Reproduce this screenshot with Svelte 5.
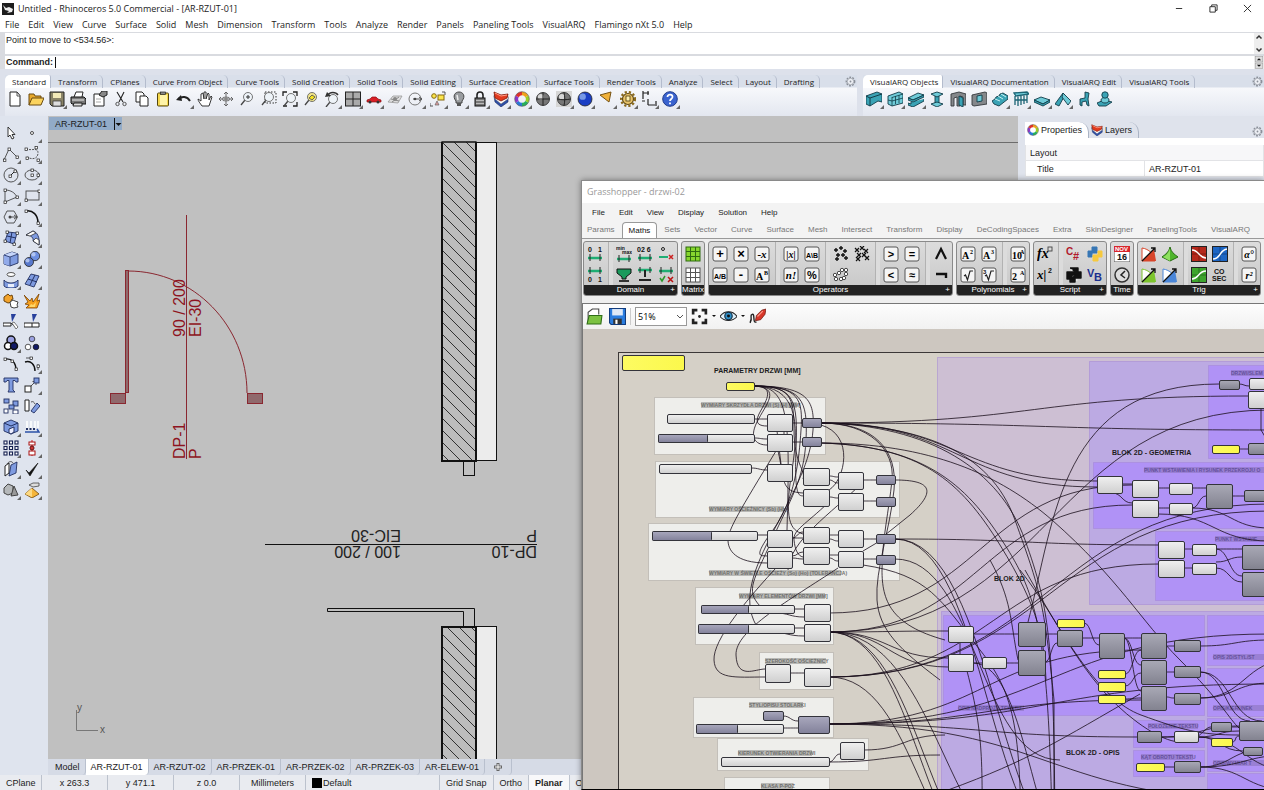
<script>
	const menus = ['File', 'Edit', 'View', 'Curve', 'Surface', 'Solid', 'Mesh', 'Dimension', 'Transform', 'Tools', 'Analyze', 'Render', 'Panels', 'Paneling Tools', 'VisualARQ', 'Flamingo nXt 5.0', 'Help']
	const toolTabs = ['Standard', 'Transform', 'CPlanes', 'Curve From Object', 'Curve Tools', 'Solid Creation', 'Solid Tools', 'Solid Editing', 'Surface Creation', 'Surface Tools', 'Render Tools', 'Analyze', 'Select', 'Layout', 'Drafting']
	const arqTabs = ['VisualARQ Objects', 'VisualARQ Documentation', 'VisualARQ Edit', 'VisualARQ Tools']
	const layouts = ['Model', 'AR-RZUT-01', 'AR-RZUT-02', 'AR-PRZEK-01', 'AR-PRZEK-02', 'AR-PRZEK-03', 'AR-ELEW-01']
	const ghMenus = ['File', 'Edit', 'View', 'Display', 'Solution', 'Help']
	const ghTabs = ['Params', 'Maths', 'Sets', 'Vector', 'Curve', 'Surface', 'Mesh', 'Intersect', 'Transform', 'Display', 'DeCodingSpaces', 'Extra', 'SkinDesigner', 'PanelingTools', 'VisualARQ']

	// a trailing + marks a button with a flyout
	const tools = (names) => names.split(' ').map((n) => ({ name: n.replace('+', ''), flyout: n.endsWith('+') }))

	const standard = tools('new open save+ print props cut copy paste undo+ pan orbit zoom zoomwin zoomext zoomsel undoview+ views+ car+ map+ circle+ osnap+ bulb+ lock+ layers+ wheel+ sphere spherebox+ blue+ flag+ gears+ dims+ help+')
	const arq = tools('wall+ curtain+ beam+ column door window stair+ railing+ slab+ roof+ chair person')
	const side = tools('arrow point+ polyline+ curvepts+ circler+ ellipse+ arc+ rect+ polygon+ fillet+ srfpts+ srfbend+ box+ spheres+ tube+ plane+ puzzle explode trim split group+ ungroup fair blend+ text move+ scatter rotate boxcut+ project+ array+ align+ flip+ check+ solids+ pyramid+')

	const o = 'fill="none" stroke="#444" stroke-width=".9"'
	const pt = (x, y, c = '#fff') => `<rect x="${x - 1}" y="${y - 1}" width="2.4" height="2.4" fill="${c}" stroke="#222" stroke-width=".7"/>`
	const lens = (x, y, c = '#eef3f8') => `<path d="M${x - 3} ${y + 3}L${x - 7} ${y + 8}" stroke="#444" stroke-width="1.3"/><circle cx="${x}" cy="${y}" r="4.5" fill="${c}" stroke="#666" stroke-width=".9"/>`
	const ball = (x, y, r, a, b) => `<circle cx="${x}" cy="${y}" r="${r}" fill="${a}" stroke="#222" stroke-width=".8"/><circle cx="${x - r / 3}" cy="${y - r / 3}" r="${r / 2.2}" fill="${b}" fill-opacity=".7"/>`
	const teal = 'fill="#3aa3b5" stroke="#123c48" stroke-width=".9"'
	const tealLight = 'fill="#6fcbd8" stroke="#123c48" stroke-width=".9"'
	const stone = 'fill="#85888b" stroke="#33383b" stroke-width=".9"'
	const navy = 'fill="#7f9be0" stroke="#223060" stroke-width=".9"'

	const icons = {
		new: `<path d="M3 1H10L13 4.500V15H3Z" fill="#fff" stroke="#222"/><path d="M10 1V5H13" ${o}/>`,
		open: `<path d="M1 14V3H6L7 5H13V8" fill="#e8a92c" stroke="#6a4b10"/><path d="M1 14L4 7H16L13 14Z" fill="#fbd35e" stroke="#6a4b10"/>`,
		save: `<path d="M1 1H15V15H3L1 13Z" fill="#8a8468" stroke="#222"/><rect x="4" y="2" width="8" height="5" fill="#f2e9b8"/><rect x="4" y="10" width="8" height="5" fill="#ddd" stroke="#333" stroke-width=".7"/>`,
		print: `<path d="M4 6L6 1H13L12 6" fill="#fff" stroke="#222"/><path d="M1 6H14L16 8V13H2L1 12Z" fill="#777" stroke="#111"/><path d="M2 9H14" stroke="#eee"/><path d="M4 12H12V15H3Z" fill="#ddd" stroke="#222"/>`,
		props: `<path d="M2 3H12V15H2Z" fill="#fff" stroke="#222"/><path d="M7 4L10 0H15V4L11 6Z" fill="#888" stroke="#222"/><path d="M4 8H9M4 11H9" stroke="#aaa"/>`,
		cut: `<path d="M4 1L10 11M11 1L6 11" stroke="#222" stroke-width="1.100"/><circle cx="4.500" cy="13" r="1.700" ${o}/><circle cx="11.500" cy="13" r="1.700" ${o}/>`,
		copy: `<path d="M2 1H8L10 3V11H2Z" fill="#fff" stroke="#222"/><path d="M6 5H12L14 7V15H6Z" fill="#fff" stroke="#222"/>`,
		paste: `<rect x="2.500" y="2" width="11" height="13" rx="1" fill="#f6d84c" stroke="#54460e"/><rect x="5" y="4" width="7" height="10" fill="#fff4a8"/><rect x="5.500" y="1" width="5" height="2.500" fill="#888" stroke="#222" stroke-width=".7"/>`,
		undo: `<path d="M2 8C6 5 11 5 14 10" fill="none" stroke="#222" stroke-width="2"/><path d="M0 9L5 4L6 10Z" fill="#222"/>`,
		pan: `<path d="M5 15C3 12 1 10 1 8L4 10V3L6 2L7 8V1H9V8L11 2L12 3V9L14 5L15 6L13 12L12 15Z" fill="#fff" stroke="#222" stroke-width=".9"/>`,
		orbit: `<path d="M8 1V15M1 8H15M6 3L8 1L10 3M6 13L8 15L10 13M3 6L1 8L3 10M13 6L15 8L13 10" fill="none" stroke="#666"/><ellipse cx="8" cy="8" rx="4" ry="2" fill="none" stroke="#777"/><circle cx="8" cy="8" r="1.800" fill="#888"/>`,
		zoom: lens(9, 6) + '<path d="M7 6H11M9 4V8" stroke="#333"/>',
		zoomwin: `<rect x="4" y="1" width="11" height="11" fill="none" stroke="#333" stroke-dasharray="1.500 1.500"/>` + lens(8, 6),
		zoomext: `<path d="M1 5V1H5M11 1H15V5M15 11V15H11M5 15H1" fill="none" stroke="#222" stroke-width="1.300"/>` + lens(9, 7),
		zoomsel: lens(9, 6, '#f2e58a') + '<path d="M6 7L9 4L12 6L9 9Z" fill="#f4e21c" stroke="#665"/>',
		undoview: lens(9, 8) + '<path d="M3 5C6 0 12 1 14 4" fill="none" stroke="#333" stroke-width="1.400"/><path d="M1 6L3 1L7 5Z" fill="#333"/>',
		views: `<rect x="0.500" y="1" width="15" height="14" fill="#aaa" stroke="#222"/><path d="M8 1V15M0 8H16" stroke="#222"/>`,
		car: `<path d="M1 9L4 8L6 6H10L12 8L15 9V11H1Z" fill="#d91f26" stroke="#891015" stroke-width=".7"/><circle cx="4" cy="11" r="1.500" fill="#333"/><circle cx="12" cy="11" r="1.500" fill="#333"/>`,
		map: `<path d="M1 11L6 5H15L11 12Z" fill="#ddd" stroke="#999" stroke-width=".8"/><path d="M5 11L12 6M4 8L12 10" stroke="#888"/><circle cx="8" cy="8" r="2" fill="#888"/>`,
		circle: `<circle cx="7" cy="8" r="6" fill="none" stroke="#777"/><path d="M5 8H14M11 6L14 8L11 10" fill="none" stroke="#555"/><circle cx="7" cy="8" r="1.300" fill="#444"/>`,
		osnap: `<circle cx="4" cy="5" r="2.300" fill="#fbe54c" stroke="#86690d"/><rect x="8" y="4" width="6" height="5" fill="#fbe54c" stroke="#86690d"/><path d="M5 14L7 10L9 14Z" fill="#d99" stroke="#666" stroke-width=".7"/><path d="M12 1H15V4M0 12V15H3" ${o}/>`,
		bulb: `<path d="M5 10C1 5 4 1 8 1S15 5 11 10V12H5Z" fill="#9a9da0" stroke="#444"/><path d="M6 4L7 9" stroke="#eee" stroke-width="1.500"/><rect x="6" y="12" width="4" height="3" fill="#555"/>`,
		lock: `<path d="M5 7V4C5 0 11 0 11 4V7" fill="none" stroke="#222" stroke-width="1.600"/><rect x="3" y="7" width="10" height="8" fill="#777" stroke="#111"/><path d="M4 9.500H12M4 12.500H12" stroke="#bbb"/>`,
		layers: `<path d="M1 5L8 9L15 6V11L8 16L2 11Z" fill="#2e4fa8" stroke="#1b2c60" stroke-width=".6"/><path d="M1 4L8 8L15 5V8L8 13L2 8Z" fill="#fff" stroke="#555" stroke-width=".5"/><path d="M1 1L8 4L15 3L14 7L8 10L2 7Z" fill="#e23a1e" stroke="#7d1405" stroke-width=".8"/><path d="M2 2L8 5L14 4" fill="none" stroke="#ffa08a"/>`,
		wheel: `<g fill="none" stroke-width="3.400"><path d="M8 2.500A5.500 5.500 0 0 1 12.800 5.300" stroke="#f0a21c"/><path d="M12.800 5.300A5.500 5.500 0 0 1 12.800 10.800" stroke="#9bcf26"/><path d="M12.800 10.800A5.500 5.500 0 0 1 8 13.500" stroke="#27b05b"/><path d="M8 13.500A5.500 5.500 0 0 1 3.200 10.800" stroke="#2a78d8"/><path d="M3.200 10.800A5.500 5.500 0 0 1 3.200 5.300" stroke="#8b38c8"/><path d="M3.200 5.300A5.500 5.500 0 0 1 8 2.500" stroke="#e0312b"/></g><circle cx="8" cy="8" r="7.300" fill="none" stroke="#555" stroke-width=".6"/>`,
		sphere: ball(8, 8, 6.5, '#777', '#fff') + '<path d="M8 1.500V14.500M1.500 8H14.500" stroke="#222"/>',
		spherebox: `<rect width="16" height="16" fill="#d6d6d6"/>` + ball(8, 8, 6.5, '#777', '#fff') + '<path d="M8 1.500C9 6 9 10 8 14.500M1.500 8C6 9 10 9 14.500 8" fill="none" stroke="#222"/>',
		blue: ball(8, 8, 7, '#1a3ec4', '#9fc0f5'),
		flag: `<path d="M1 4L12 1L10 11Z" fill="#f0b13a" stroke="#775314"/>`,
		gears: `<circle cx="8" cy="8" r="5.500" fill="#e9c46a" stroke="#5d4714" stroke-width="1.200"/><circle cx="8" cy="8" r="7" fill="none" stroke="#8a6a1c" stroke-width="2.200" stroke-dasharray="2.200 2"/><rect x="6" y="5" width="4" height="5" fill="#fff1b0" stroke="#4a3808" stroke-width=".8"/>`,
		dims: `<path d="M8 2H2V8M2 2V0M7 4V0M7 14H14M7 8V14M15 10V15M1 10H4" fill="none" stroke="#222" stroke-width="1.200"/>`,
		help: `<circle cx="8" cy="8" r="7.300" fill="#3a63cf" stroke="#203b8a"/><path d="M5.500 6C5.500 2.500 11 3 10.500 6C10.300 8 8 8 8 10M8 11.500V13.300" fill="none" stroke="#fff" stroke-width="1.800"/>`,

		wall: `<path d="M0 5L11 1L16 3V11L12 10L4 15L0 13Z" ${teal}/><path d="M0 5L4 7L16 3M4 7V15" fill="none" stroke="#123c48"/>`,
		curtain: `<path d="M1 5L12 1L16 3V12L5 15L1 13Z" ${tealLight}/><path d="M5 6V15M8.500 5V13M12 4V12M1 9L5 10L16 7M5 6.500L16 3" fill="none" stroke="#123c48" stroke-width=".8"/>`,
		beam: `<path d="M0 7L10 2L16 4L5 9Z" ${tealLight}/><path d="M0 7L5 9L16 4V6L5 11L0 9ZM3 11V13L0 12V14L5 16L16 10V8" ${teal}/>`,
		column: `<path d="M6 5H10V12H6Z" ${teal}/><path d="M2 13L8 11L14 13L8 16Z" ${tealLight}/><path d="M2 3L8 1L14 3L8 6Z" ${tealLight}/>`,
		door: `<path d="M1 3L9 1L16 3V14H13V6L10 5V15H7V6L4 7V15H1Z" ${stone}/><path d="M9 5L13 7V16L9 14Z" ${teal}/>`,
		window: `<path d="M1 4L14 1L16 2V13L3 15L1 14Z" ${stone}/><path d="M6 5L11 4V10L6 11Z" ${tealLight}/>`,
		stair: `<path d="M0 10L3 8L4 6L7 5L8 3L11 2L16 5V8L7 15L2 13Z" ${teal}/><path d="M3 8L8 10M6 5L11 8M9 3L14 6" stroke="#c5f2f5"/>`,
		railing: `<path d="M1 2L14 1L16 3L3 5ZM2 5V14M5 5V15M8 5V14M11 4V13M14 4V12M2 9H14" fill="#6fcbd8" stroke="#1c6475" stroke-width="1.300"/>`,
		slab: `<path d="M0 9L7 6L16 9L9 13Z" ${tealLight}/><path d="M0 9V11L9 15L16 11V9L9 13Z" ${teal}/>`,
		roof: `<path d="M0 13L8 2L10 4L4 15Z" ${teal}/><path d="M8 2L16 10L13 14L7 6Z" ${tealLight}/>`,
		chair: `<path d="M9 1L13 2L12 8L13 15L11 14L10 10L6 11V15L4 14V8L9 7Z" ${teal}/>`,
		person: `<path d="M0 12L7 9L15 11L9 15L2 15Z" ${teal}/><path d="M4 9C4 6 12 5 12 9S4 13 4 9Z" ${tealLight}/><circle cx="8" cy="4" r="3.200" ${teal}/>`,

		arrow: `<path d="M5 2V12L7 10L9 14L11 13L9 9.500H12Z" fill="#fff" stroke="#222" stroke-width=".9"/>`,
		point: `<circle cx="8" cy="8" r="1.500" fill="#fff" stroke="#222" stroke-width=".8"/>`,
		polyline: `<path d="M1 14L6 3L14 11" ${o}/>` + pt(1.5, 14) + pt(6, 3) + pt(14, 11),
		curvepts: `<path d="M2 3C8 5 14 1 14 7S8 14 3 11" ${o} stroke-dasharray="2 1"/>` + pt(2, 3) + pt(12, 1.5) + pt(3, 12) + pt(14, 14),
		circler: `<circle cx="8" cy="8" r="7" ${o}/><path d="M7 9L12 4" stroke="#222"/>` + pt(7, 9) + pt(12, 4),
		ellipse: `<ellipse cx="8" cy="8" rx="7" ry="5" ${o}/>` + pt(8, 3) + pt(8, 8) + pt(14, 8),
		arc: `<path d="M2 14V2C8 2 12 5 14 9L2 14" ${o}/>` + pt(2, 2) + pt(14, 9) + pt(2, 14),
		rect: `<rect x="2" y="3" width="13" height="9" ${o}/>` + pt(15, 3) + pt(2, 12),
		polygon: `<path d="M4 2H11L14.500 8L11 14H4L1 8Z" ${o}/><path d="M7 8H14M11 6L14 8L11 10" ${o}/><circle cx="7" cy="8" r="1.500" fill="#444"/>`,
		fillet: `<path d="M2 2C9 1 14 6 14 14" fill="none" stroke="#111" stroke-width="1.500"/>` + pt(2, 2) + pt(14, 14),
		srfpts: `<path d="M5 2L14 3L11 14L2 11Z" ${navy}/><path d="M4 6L13 8M9 2L7 13" stroke="#223060"/>` + pt(4, 2) + pt(14, 3) + pt(2, 11) + pt(11, 14),
		srfbend: `<path d="M2 5L9 1C13 2 16 7 15 15L9 11C10 8 7 5 2 5Z" ${navy}/><path d="M2 5L9 1L12 3L6 6Z" fill="#fff" stroke="#333" stroke-width=".8"/><path d="M9 11L12 8L15 10V15Z" fill="#fff" stroke="#333" stroke-width=".8"/>`,
		box: `<path d="M1 4L9 1L15 3V12L7 15L1 13Z" ${navy}/><path d="M1 4L7 6L15 3L9 1Z" fill="#c6d5fa"/><path d="M7 6V15L1 13V4Z" fill="#92abea"/><path d="M1 4L7 6L15 3M7 6V15" fill="none" stroke="#223060" stroke-width=".8"/>`,
		spheres: ball(11, 5, 4.7, '#6d8fe0', '#cfdcfa') + ball(5, 11, 4.5, '#5878cc', '#cfdcfa'),
		tube: `<path d="M1 8C4 12 12 12 15 8V14C12 17 4 17 1 14Z" ${navy}/><ellipse cx="8" cy="2.500" rx="4" ry="2" fill="#fff" stroke="#555"/><path d="M5 12H11V15H5Z" fill="#e8eefc"/>`,
		plane: `<path d="M1 12L7 2L15 4L10 15Z" ${navy}/><path d="M4 7L13 10M11 3L6 13" stroke="#223060"/>`,
		puzzle: `<path d="M1 4L5 1L7 3L9 2L10 6L8 7L9 9L5 10L3 9L1 8Z" fill="#f2a32c" stroke="#6d430a"/><path d="M7 9L10 7L12 8L15 9L14 12L15 14L11 15L8 14Z" fill="#fff" stroke="#444"/>`,
		explode: `<path d="M0 2L6 8L8 5L9 9L15 1L13 8L16 7L13 15H2L5 12L1 11L4 9Z" fill="#f6a01e" stroke="#7b4303" stroke-width=".8"/><path d="M5 14L7 11L9 12L12 9L11 14Z" fill="#ffd76a"/>`,
		trim: `<path d="M8 0H13L9 8Z" fill="#28409c"/><path d="M0 9H8V12H0ZM8 9L13 14" fill="#fff" stroke="#222"/><path d="M9 9L11 8L15 13L13 15Z" fill="#fff" stroke="#777"/>`,
		split: `<path d="M8 0H13L9 8Z" fill="#28409c"/><path d="M0 9H15V13H0ZM8 9V13" fill="#fff" stroke="#222"/>`,
		group: '<circle cx="8" cy="5" r="4" fill="#9aa0e0" stroke="#111" stroke-width="1.500"/><circle cx="5" cy="11" r="3.500" fill="#fff" stroke="#111" stroke-width="1.500"/><circle cx="11" cy="11" r="3.500" fill="#111a66" stroke="#111" stroke-width="1.500"/>',
		ungroup: '<circle cx="8" cy="4" r="2.800" fill="#9aa0e0" stroke="#333" stroke-width=".8"/><circle cx="4" cy="12" r="2.800" fill="#fff" stroke="#333" stroke-width=".8"/><circle cx="12" cy="12" r="2.800" fill="#111a66" stroke="#111" stroke-width=".8"/>',
		fair: `<path d="M2 3C9 2 13 7 13 14" fill="none" stroke="#111" stroke-width="1.400"/>` + pt(2, 3) + pt(9, 5) + pt(13, 13),
		blend: `<path d="M1 6C7 4 11 9 11 15" fill="none" stroke="#111" stroke-width="1.400"/><path d="M2 2H9M14 8V14" ${o}/>` + pt(7, 2) + pt(14, 10),
		text: `<path d="M1 1H15V5H13L12 3.500H10V13L12 15H5L6 13V3.500H4L3 5H1Z" ${navy}/>`,
		move: `<path d="M4 12L12 4M8.500 4.500H12V8" ${o}/><rect x="1" y="9" width="6" height="6" fill="#fff" stroke="#222"/><rect x="10" y="1" width="5" height="5" ${navy}/>`,
		scatter: `<g ${navy}><rect x="1" y="1" width="5" height="4"/><rect x="10" y="3" width="5" height="5"/><rect x="6" y="7" width="5" height="4"/><rect x="1" y="11" width="4" height="4" fill="#fff"/><rect x="10" y="12" width="5" height="4" fill="#fff"/></g>`,
		rotate: `<path d="M1 2H5V13H1Z" fill="#fff" stroke="#222"/><path d="M7 4C9 3 10 4 11 6" ${o}/><path d="M7 13L13 5L16 8L10 15Z" ${navy}/>`,
		boxcut: `<path d="M1 4L8 1L15 4V12L8 15L1 12Z" ${navy}/><path d="M1 4L8 7L15 4" fill="none" stroke="#223060"/><path d="M6 10L11 8V13L8 15L6 14Z" fill="#eef" stroke="#223060"/>`,
		project: `<path d="M3 2V9M7 2V9M11 2V9M14 2V9" stroke="#fff" stroke-width="1.500"/><path d="M1 13H15L13 10" fill="none" stroke="#2c51a8" stroke-width="1.500"/><path d="M2 10H12" stroke="#223060" stroke-dasharray="2 1.500" stroke-width="2"/>`,
		array: [1, 6.5, 12].map((y) => [1, 6.5, 12].map((x) => `<rect x="${x}" y="${y}" width="3" height="3" fill="#fff" stroke="#152050" stroke-width="1.100"/>`).join('')).join(''),
		align: `<path d="M8 0V16" stroke="#c22"/><rect x="5" y="2" width="6" height="3" fill="#fff" stroke="#a11"/><circle cx="8" cy="8" r="2" fill="#c33" stroke="#611"/><rect x="5" y="11" width="6" height="4" fill="#fff" stroke="#a11"/>`,
		flip: `<path d="M2 5L6 2V12L2 15Z" fill="#fff" stroke="#222"/><path d="M8 4L14 1L13 12L6 15Z" ${navy}/><path d="M4 3C6 0 9 0 10 2" ${o}/>`,
		check: `<path d="M2 9L5 12L14 2L6 15Z" fill="#111" stroke="#111" stroke-width=".6"/>`,
		solids: `<path d="M1 6L5 2L10 4V11L5 13L1 11Z" fill="#b5b8ba" stroke="#444"/><path d="M11 4L15 13L8 14Z" fill="#999" stroke="#444"/>`,
		pyramid: `<path d="M1 12L8 6L15 12L8 16Z" fill="#f5b53a" stroke="#70480a" stroke-width=".8"/><path d="M8 6V15L1 12Z" fill="#fdd982"/><path d="M5 3L9 1H15V4L9 5Z" fill="#ddd" stroke="#444" stroke-width=".8"/>`
	}

	// ribbon glyph helpers
	const key = (t, size = 11, extra = '') => `<rect x="1" y="1" width="14" height="14" rx="2" fill="#f5f5f5" stroke="#555"/><text x="8" y="12" text-anchor="middle" font-family="Liberation Sans, sans-serif" font-weight="700" font-size="${size}" ${extra}>${t}</text>`
	const serif = 'font-style="italic" style="font-family: Liberation Serif, serif"'
	const sup = (a, b) => `<rect x="1" y="1" width="14" height="14" rx="2" fill="#f5f5f5" stroke="#555"/><text x="2" y="13" font-family="Liberation Serif, serif" font-weight="700" font-size="10">${a}</text><text x="10" y="8" font-family="Liberation Serif, serif" font-weight="700" font-size="6">${b}</text>`
	const small = (t, x, y, fill = '#111', size = 7) => `<text x="${x}" y="${y}" font-family="Liberation Sans, sans-serif" font-weight="700" font-size="${size}" fill="${fill}">${t}</text>`
	const root = (n) => `<rect x="1" y="1" width="14" height="14" rx="2" fill="#f5f5f5" stroke="#555"/><path d="M4 9L5.500 8L7.500 13L10 4H13" fill="none" stroke="#222" stroke-width="1.200"/>` + small(n, 2, 7, '#111', 6)
	const bar = (y) => `<path d="M1 ${y}H15" stroke="#1fae73" stroke-width="2.500"/><path d="M3 ${y - 4}V${y + 3}M13 ${y - 4}V${y + 3}" stroke="#222"/>`
	const grid = (c, s) => `<rect x="1" y="1" width="14" height="14" fill="${c}" stroke="${s}"/><path d="M5.500 1V15M10.500 1V15M1 5.500H15M1 10.500H15" stroke="${s}"/>`
	const tile = (c, d) => `<rect x="0.500" y="0.500" width="15" height="15" fill="${c}" stroke="#222"/><path d="M8 1V15M1 8H15" stroke="#000" stroke-opacity=".3"/><path d="${d}" fill="none" stroke="#fff" stroke-width="1.500"/>`
	const tri = (c) => `<path d="M1 2C8 3 13 8 14 15H1Z" fill="#fff" stroke="${c}"/><path d="M1 15L13 3L15 15Z" fill="${c}"/><path d="M1 15L14 2M10 2H14V6" fill="none" stroke="#111" stroke-width="1.300"/>`
	const dots = [[3, 4], [8, 2], [12, 5], [5, 9], [10, 9], [13, 12], [4, 13]]

	const ribbon = [
		{ name: 'Domain', more: true, sets: [
			[small('0', 1, 6) + small('1', 11, 6) + bar(12), bar(4) + small('0', 1, 15) + small('1', 11, 15)],
			[small('min', 0, 4, '#111', 5) + small('max', 6, 8, '#111', 5) + bar(13), `<path d="M1 2H15V6L10 10V12H6V10L1 6Z" fill="#1a9a5c" stroke="#111"/><path d="M3 14H13" stroke="#333" stroke-width="2"/>`,
				small('02 6', 0, 6) + bar(12), bar(3) + '<path d="M8 3V10M2 13H14" stroke="#222" stroke-width="2"/>',
				'<circle cx="5" cy="3" r="1.500" fill="none" stroke="#222"/><path d="M1 11H10" stroke="#1fae73" stroke-width="2"/><path d="M11 9L15 13M15 9L11 13" stroke="#c22" stroke-width="1.500"/>', bar(4) + '<path d="M2 11L4 14L7 9" fill="none" stroke="#2a9a2a" stroke-width="1.500"/><path d="M10 10L15 15M15 10L10 15" stroke="#b11" stroke-width="1.500"/>']
		] },
		{ name: 'Matrix', sets: [[grid('#86d62e', '#2f6a10'), grid('#fff', '#555')]] },
		{ name: 'Operators', more: true, sets: [
			[key('+', 13), key('A/B', 7), key('×', 13), key('-', 13), key('-x', 11, serif), sup('A', 'B')],
			[key('|x|', 10, serif), key('n!', 11, serif), key('A\\B', 7), key('%')],
			[dots.map(([x, y]) => `<path d="M${x - 2} ${y}H${x + 2}M${x} ${y - 2}V${y + 2}" stroke="#111" stroke-width="1.400"/>`).join(''), [[3, 12], [2, 8], [6, 6], [9, 3], [13, 3], [13, 7], [8, 12], [11, 11]].map(([x, y]) => `<circle cx="${x}" cy="${y}" r="1.700" fill="#fff" stroke="#222" stroke-width=".8"/>`).join(''), dots.map(([x, y]) => `<path d="M${x - 2} ${y - 2}L${x + 2} ${y + 2}M${x + 2} ${y - 2}L${x - 2} ${y + 2}" stroke="#111" stroke-width="1.200"/>`).join('')],
			[key('&gt;'), key('&lt;'), key('='), key('≈')],
			['<path d="M3 13L8 3L13 13" fill="none" stroke="#111" stroke-width="2.200"/>', '<path d="M3 7H13V11" fill="none" stroke="#111" stroke-width="2.400"/>']
		] },
		{ name: 'Polynomials', more: true, sets: [[sup('A', '2'), root(''), sup('A', '3'), root('3')], [sup('10', 'A'), sup('2', 'A')]] },
		{ name: 'Script', more: true, sets: [
			[`<text x="0" y="12" font-family="Liberation Serif, serif" font-style="italic" font-weight="700" font-size="14">fx</text><rect x="11" y="1" width="4" height="4" ${o}/>`, `<text x="0" y="12" font-family="Liberation Serif, serif" font-style="italic" font-weight="700" font-size="13">x|</text>` + small('2', 11, 6)],
			[small('C', 0, 9, '#b11a2c', 10) + small('#', 7, 14, '#b11a2c', 11), `<path d="M4 1H12V8H6V12H1V5H8M12 5H15V11H9V15H4V12" fill="#111" stroke="#111" stroke-width="1.400" stroke-linejoin="round"/><path d="M5 3H6.500M10 13H11.500" stroke="#fff"/>`,
				`<path d="M5 1H10V7H5V11H1V5H5Z" fill="#3776b4" stroke="#3776b4" stroke-linejoin="round"/><path d="M11 15H6V9H11V5H15V11H11Z" fill="#f6c93e" stroke="#f6c93e" stroke-linejoin="round"/>`, small('V', 0, 10, '#1a2f8e', 11) + small('B', 7, 14, '#1a2f8e', 11)]
		] },
		{ name: 'Time', sets: [[`<rect x="0" y="0" width="16" height="16" fill="#fff" stroke="#555"/><rect x="0" y="0" width="16" height="6" fill="#d8262c"/>` + small('NOV', 1, 5, '#fff', 6) + small('16', 3, 14, '#111', 9), `<circle cx="8" cy="8" r="7" fill="#ddd" stroke="#333" stroke-width="1.500"/><path d="M11 4L7 8L11 11" fill="none" stroke="#222" stroke-width="1.500"/>`]] },
		{ name: 'Trig', more: true, sets: [
			[tri('#d8452a'), tri('#7cc42c'), `<path d="M8 1C9 6 12 8 16 11L8 15L0 11C4 8 7 6 8 1Z" fill="#4fb52c" stroke="#276b12"/><path d="M8 2C8 7 8 12 8 15L1 11C5 9 7 6 8 2Z" fill="#8ee05f"/>`, tri('#4a86d8')],
			[tile('#b5281b', 'M1 4C8 4 8 12 15 12'), tile('#3da42c', 'M1 12C8 12 7 4 15 4'), tile('#1d66c4', 'M1 13C9 13 7 4 15 3'), small('CO', 2, 7) + small('SEC', 0, 14)],
			[key('α°', 10, serif), key('r²', 10, serif)]
		] },
		{ name: '', sets: [['', '']] }
	]

	// canvas items: x, y, right, bottom
	const paleGroups = [[654, 397, 825, 454], [655, 461, 899, 517], [648, 523, 899, 580], [695, 587, 833, 644], [759, 652, 833, 689], [693, 697, 833, 737], [717, 738, 868, 770], [724, 777, 829, 792]]
	const blocks = [
		[937, 357, 1500, 900, '#cdbfd3'], [1089, 361, 1500, 604, '#bcaae3'], [941, 611, 1500, 900, '#bcaae3'],
		[1208, 365, 1500, 458, '#b092f6'], [1093, 462, 1500, 528, '#b092f6'], [1155, 531, 1500, 600, '#b092f6'],
		[943, 615, 1204, 715, '#b092f6'], [1207, 615, 1500, 665, '#b092f6'], [1207, 668, 1500, 716, '#b092f6'],
		[1207, 718, 1500, 771, '#b092f6'], [1207, 773, 1500, 900, '#b092f6'], [1133, 720, 1204, 747, '#b092f6'], [1133, 750, 1204, 776, '#b092f6']
	]
	const sliders = [[667, 414, 754, 423, 0], [658, 434, 754, 442, 49], [659, 464, 751, 473, 0], [652, 531, 757, 540, 59], [701, 605, 794, 613, 47], [698, 624, 794, 633, 50], [696, 724, 783, 733, 41], [721, 757, 829, 766, 0]]
	const nodes = {
		light: [
			[767, 414, 792, 431], [767, 434, 792, 451], [767, 464, 792, 481], [803, 468, 829, 485], [803, 489, 829, 506], [838, 472, 863, 489], [838, 493, 863, 510],
			[767, 530, 792, 547], [767, 551, 792, 568], [803, 527, 829, 543], [803, 547, 829, 564], [838, 530, 863, 547], [838, 551, 863, 567],
			[804, 604, 830, 621], [804, 624, 830, 641], [765, 664, 790, 682], [804, 668, 830, 686], [840, 742, 864, 759],
			[1249, 378, 1280, 389], [1248, 391, 1280, 408], [1097, 476, 1122, 493], [1132, 480, 1158, 497], [1132, 500, 1158, 517], [1169, 483, 1192, 494], [1169, 503, 1192, 514],
			[1158, 541, 1184, 558], [1158, 560, 1184, 577], [1192, 544, 1216, 555], [1192, 563, 1216, 574],
			[948, 626, 973, 642], [948, 654, 973, 671], [982, 657, 1006, 668], [1174, 731, 1198, 742]
		],
		violet: [[802, 418, 821, 427], [802, 437, 821, 446], [876, 475, 895, 484], [876, 497, 895, 506], [876, 534, 895, 543], [876, 555, 895, 564], [763, 711, 783, 720], [798, 716, 829, 733]],
		grey: [
			[1219, 380, 1239, 389], [1248, 443, 1280, 454], [1206, 484, 1232, 508], [1244, 490, 1280, 501], [1242, 545, 1280, 569], [1242, 572, 1280, 596],
			[1018, 622, 1045, 646], [1018, 650, 1045, 675], [1057, 630, 1082, 646], [1099, 633, 1124, 658], [1141, 633, 1166, 658], [1141, 660, 1166, 684], [1141, 686, 1166, 710],
			[1174, 640, 1200, 651], [1174, 666, 1200, 677], [1174, 693, 1200, 704], [1137, 731, 1161, 742], [1211, 722, 1231, 731], [1239, 721, 1280, 740], [1243, 747, 1262, 755], [1174, 761, 1200, 772]
		],
		yellow: [[622, 355, 684, 370], [726, 382, 754, 390], [1212, 445, 1239, 453], [1057, 619, 1084, 627], [1098, 670, 1125, 678], [1098, 682, 1125, 691], [1098, 695, 1125, 703], [1211, 738, 1232, 746], [1136, 763, 1164, 771]]
	}
	const titles = [['PARAMETRY DRZWI [MM]', 714, 373], ['BLOK 2D - GEOMETRIA', 1112, 455], ['BLOK 2D', 994, 581], ['BLOK 2D - OPIS', 1066, 755]]
	const notes = [
		['WYMIARY SKRZYDŁA DRZWI (S) (H) [MM]', 701, 405, 96], ['WYMIARY OŚCIEŻNICY (Sb) (Hb)', 709, 509, 75], ['WYMIARY W ŚWIETLE OŚCIEŻY (So) (Ho) (TOLERANCJA)', 709, 573, 132],
		['WYMIARY ELEMENTÓW DRZWI [MM]', 739, 596, 86], ['SZEROKOŚĆ OŚCIEŻNICY', 765, 661, 61], ['STYL/OPISU STOLARKI', 749, 705, 54], ['KIERUNEK OTWIERANIA DRZWI', 738, 753, 74], ['KLASA P-POŻ', 761, 786, 32]
	]
	const violetNotes = [
		['DRZWI/SLEM', 1231, 373, 50], ['PUNKT WSTAWIENIA I RYSUNEK PRZEKROJU O', 1144, 470, 140], ['PUNKT WSTAWIE', 1215, 539, 60], ['OPIS NADPROŻA TEKSTU', 958, 708, 66],
		['OPIS 2D/STYL/ST', 1213, 657, 60], ['OPIS/KIERUNEK', 1213, 708, 60], ['POŁOŻENIE TEKSTU', 1148, 726, 50], ['KĄT OBROTU TEKSTU', 1141, 757, 52], ['OPIS/WYMIAR T', 1213, 763, 60]
	]

	// straight-through links, drawn with horizontal tangents at both ends
	const links = [
		[754, 419, 767, 419], [754, 438, 767, 439], [751, 468, 767, 470], [757, 535, 767, 535], [792, 423, 802, 423], [792, 442, 802, 442],
		[829, 476, 838, 477], [829, 497, 838, 498], [829, 480, 838, 483], [863, 480, 876, 480], [863, 501, 876, 501], [792, 538, 803, 532], [792, 538, 803, 538], [792, 558, 803, 559], [792, 556, 803, 552],
		[829, 535, 838, 535], [829, 539, 838, 541], [829, 555, 838, 555], [829, 558, 838, 561], [863, 539, 876, 539], [863, 559, 876, 559],
		[794, 609, 804, 609], [794, 628, 804, 628], [775, 613, 804, 617], [770, 632, 804, 636], [790, 673, 804, 673], [783, 716, 798, 721], [783, 728, 798, 728], [829, 762, 840, 754], [829, 762, 940, 755], [864, 750, 945, 735],
		[821, 423, 1248, 396], [821, 423, 1270, 430], [821, 423, 1097, 487], [821, 423, 1097, 481], [895, 539, 1158, 545], [895, 539, 1100, 880], [895, 559, 1060, 760], [895, 539, 1080, 860],
		[829, 613, 1132, 485], [829, 632, 1132, 505], [829, 632, 1270, 410], [829, 632, 948, 631], [829, 632, 948, 658], [829, 632, 948, 667], [829, 632, 1020, 880], [829, 632, 1060, 880], [829, 632, 1010, 880],
		[829, 677, 1270, 504], [829, 677, 1270, 511], [829, 677, 1158, 564], [829, 677, 1010, 880], [829, 724, 1270, 634], [829, 724, 1141, 700], [829, 724, 1137, 737], [829, 724, 1270, 800], [829, 724, 1141, 650], [829, 724, 1270, 684],
		[1239, 384, 1249, 386], [1239, 449, 1248, 449], [1122, 484, 1132, 484], [1112, 493, 1132, 503], [1158, 488, 1169, 488], [1158, 508, 1169, 508], [1192, 488, 1206, 488], [1192, 508, 1206, 496], [1232, 496, 1244, 496],
		[1158, 514, 1270, 541], [1192, 508, 1270, 528], [1184, 549, 1192, 549], [1184, 568, 1192, 568], [1216, 549, 1242, 549], [1216, 549, 1242, 576], [1216, 562, 1242, 557], [1216, 568, 1242, 582],
		[973, 634, 1018, 634], [973, 663, 982, 663], [1006, 663, 1018, 663], [1045, 634, 1057, 634], [1045, 662, 1057, 643], [1084, 623, 1099, 645], [1082, 638, 1099, 638], [1124, 638, 1141, 638], [1124, 638, 1141, 665], [1124, 638, 1141, 691],
		[1125, 674, 1141, 650], [1125, 686, 1141, 673], [1125, 699, 1141, 698], [1166, 646, 1174, 646], [1166, 672, 1174, 672], [1166, 697, 1174, 698], [1200, 646, 1270, 640], [1200, 672, 1250, 721], [1200, 672, 1262, 721], [1200, 698, 1290, 660],
		[1200, 698, 1270, 683], [1161, 737, 1174, 737], [1164, 767, 1174, 767], [1200, 767, 1262, 750], [1200, 767, 1290, 790], [1200, 767, 1290, 755], [1198, 737, 1239, 731], [1231, 727, 1239, 727], [1232, 742, 1239, 736], [1161, 737, 1239, 726],
		[1198, 737, 1290, 770], [1198, 737, 1243, 751], [973, 663, 1090, 880]
	]
	const linkPath = ([x1, y1, x2, y2]) => {
		const d = Math.max((x2 - x1) / 2, 5)
		return `M${x1} ${y1}C${x1 + d} ${y1} ${x2 - d} ${y2} ${x2} ${y2}`
	}
	// links that loop back or leave the visible part
	const loops = [
		'M754 386C778 386 764 404 759 414S760 426 767 426', 'M754 386C782 388 766 404 757 422S758 445 767 445',
		'M754 386C790 386 794 396 794 430S806 470 803 479', 'M754 386C795 386 798 400 796 450S800 495 803 496', 'M754 386C800 386 803 400 801 430S795 500 773 530 762 555 767 556',
		'M754 386C802 386 808 400 806 440S790 500 772 540 745 590 760 606', 'M754 386C808 386 815 400 813 430S795 490 774 530 742 600 756 625', 'M754 386C796 386 800 420 792 470S790 530 803 534', 'M754 386C790 386 790 420 787 530',
		'M777 431L781 464M784 431V434M776 451C740 510 728 530 728 540S735 563 767 563', 'M778 451C785 480 780 492 803 493', 'M829 502C805 525 793 530 794 540S798 556 803 557', 'M821 425C855 435 845 480 829 490', 'M863 482C830 515 790 540 788 570',
		'M895 480C930 480 938 490 910 515L885 535', 'M821 423C870 423 895 450 892 480S882 540 882 570 890 625 945 640', 'M821 423C875 423 898 450 894 490S875 570 877 600 900 650 940 680',
		'M863 551L890 535', 'M863 565C930 575 940 600 980 650S1020 740 1022 880', 'M838 568C790 600 735 630 736 655S755 669 765 669', 'M792 551C745 600 713 640 714 660S735 677 765 677',
		'M821 443C930 446 970 490 1005 545S1050 640 1053 880', 'M821 443C920 446 960 480 1000 545S1044 640 1046 680', 'M821 443C930 443 1000 475 1052 520C1120 580 1140 620 1180 660S1230 720 1239 728',
		'M821 423C930 425 1000 470 1025 540S1055 640 1055 880', 'M821 423C920 425 990 450 1015 520S1044 600 1054 700V880', 'M1028 622C1055 520 1060 384 1219 384', 'M948 790C1030 760 1060 740 1140 694',
		'M1018 660C1010 620 1012 600 990 560', 'M1020 570C1060 620 1080 680 1137 722S1200 727 1211 727', 'M1025 570C1065 640 1100 700 1141 715S1200 735 1239 735', 'M960 642V654M967 671C985 740 982 760 982 880', 'M1261 408V430L1270 445'
	]

	let zoom = $state('51%')
	let command = $state('')
</script>

{#snippet tool(t)}
	<button class="tool" class:flyout={t.flyout} aria-label={t.name}>
		<svg viewBox="0 0 16 16">{@html icons[t.name]}</svg>
	</button>
{/snippet}

{#snippet gear()}
	<button class="gear" aria-label="Options">
		<svg viewBox="0 0 12 12"><circle cx="6" cy="6" r="4.600" fill="none" stroke="#8a8f98" stroke-width="1.500" stroke-dasharray="2 1.300" /><circle cx="6" cy="6" r="3.500" fill="#eef0f5" stroke="#8a8f98" stroke-width=".7" /><circle cx="6" cy="6" r="1" fill="#8a8f98" /></svg>
	</button>
{/snippet}

<div class="rhino">
	<header class="titlebar">
		<svg class="logo" viewBox="0 0 12 12"><rect width="12" height="12" fill="#1d1d1d" /><path d="M1 2L4 5L7 4L11 6L10 9L5 10L7 8L3 7Z" fill="#eee" /></svg>
		<h1>Untitled - Rhinoceros 5.0 Commercial - [AR-RZUT-01]</h1>
		<div class="window-buttons">
			<button aria-label="Minimize"><svg viewBox="0 0 10 10"><path d="M1 5H8" stroke="#222" /></svg></button>
			<button aria-label="Restore"><svg viewBox="0 0 10 10"><path d="M1 3H7V9H1ZM3 3V1H9V7H7" fill="none" stroke="#222" /></svg></button>
			<button aria-label="Close"><svg viewBox="0 0 10 10"><path d="M1 1L9 9M9 1L1 9" stroke="#222" /></svg></button>
		</div>
	</header>

	<nav class="menubar">
		{#each menus as m}<button>{m}</button>{/each}
	</nav>

	<section class="command">
		<div class="history">
			<span>Point to move to &lt;534.56&gt;:</span>
			<svg viewBox="0 0 8 16"><path d="M2 4L4 2L6 4M2 12L4 14L6 12" fill="none" stroke="#333" stroke-width="1.200" /></svg>
		</div>
		<label class="prompt">
			<b>Command:</b>
			<i></i>
			<input bind:value={command} />
			<svg viewBox="0 0 8 12"><rect x="0.500" y="0.500" width="7" height="5" fill="#ddd" stroke="#999" stroke-width=".5" /><rect x="0.500" y="6.500" width="7" height="5" fill="#ddd" stroke="#999" stroke-width=".5" /><path d="M2 4L4 2L6 4ZM2 8L4 10L6 8Z" fill="#111" /></svg>
		</label>
	</section>

	<section class="toolbars">
		<div class="toolbar standard">
			<div class="tabs">
				{#each toolTabs as t, i}<button class:active={i === 0}>{t}</button>{/each}
				{@render gear()}
			</div>
			<div class="tools spread">
				{#each standard as t}{@render tool(t)}{/each}
			</div>
		</div>
		<div class="toolbar arq">
			<div class="tabs">
				{#each arqTabs as t, i}<button class:active={i === 0}>{t}</button>{/each}
				{@render gear()}
			</div>
			<div class="tools">
				{#each arq as t}{@render tool(t)}{/each}
			</div>
		</div>
	</section>

	<main>
		<aside class="sidebar">
			{#each side as t}{@render tool(t)}{/each}
		</aside>

		<div class="workspace">
			<div class="viewport">
				<button class="view-title"><span>AR-RZUT-01</span><svg viewBox="0 0 8 12"><path d="M1 0V12" stroke="#111" /><path d="M2 5H8L5 8Z" fill="#111" /></svg></button>
				<svg class="sheet">
					<defs>
						<pattern id="hatch" width="12" height="12" patternUnits="userSpaceOnUse">
							<path d="M-1 -1L13 13M-1 11L1 13M11 -1L13 1" stroke="#222" stroke-width=".9" />
						</pattern>
					</defs>
					<g transform="translate(-48 -116)">
						<path d="M48 142.500H1600" stroke="#6c6c6c" />
						<g class="walls">
							<rect x="476" y="142.500" width="20.500" height="318" fill="#ececec" />
							<rect x="442" y="142" width="34" height="319" fill="#bdbdbd" />
							<rect x="442" y="142" width="34" height="319" fill="url(#hatch)" />
							<path d="M442 142V461H476V142" class="heavy" />
							<rect x="463.500" y="461.500" width="11" height="14" fill="none" />
							<rect x="476" y="626.500" width="20.500" height="200" fill="#ececec" />
							<rect x="442" y="627" width="34" height="200" fill="#bdbdbd" />
							<rect x="442" y="627" width="34" height="200" fill="url(#hatch)" />
							<path d="M442 827V627H476V827" class="heavy" />
							<path d="M327.500 608.500H474.500V626.500H463.500V611.500H327.500Z" fill="none" />
							<path d="M265 544.500H537" />
						</g>
						<g class="marks">
							<text transform="translate(401 546) rotate(180)">100 / 200</text>
							<text transform="translate(537 546) rotate(180)">DP-10</text>
							<text transform="translate(401 530) rotate(180)">EIC-30</text>
							<text transform="translate(537 530) rotate(180)">P</text>
						</g>
						<g class="door">
							<rect x="125.500" y="270.500" width="3" height="122" />
							<rect x="110.500" y="393.500" width="15" height="10" />
							<rect x="247.500" y="393.500" width="15" height="10" />
							<path d="M128 271C194 271 247 326 247 393M186.500 215V459" fill="none" />
						</g>
						<g class="marks red">
							<text transform="translate(185 337) rotate(-90)">90 / 200</text>
							<text transform="translate(201 337) rotate(-90)">EI-30</text>
							<text transform="translate(185 459) rotate(-90)">DP-1</text>
							<text transform="translate(201 459) rotate(-90)">P</text>
						</g>
						<path d="M76.500 710V730.500H98" fill="none" stroke="#777" />
						<text x="77" y="711" class="axis">y</text>
						<text x="100" y="733" class="axis">x</text>
					</g>
				</svg>
			</div>
			<nav class="layout-tabs">
				{#each layouts as l, i}<button class:active={i === 1}>{l}</button>{/each}
				<button class="add" aria-label="Add layout"><svg viewBox="0 0 8 8"><path d="M4 0V8M0 4H8" stroke="#666" stroke-width="3" /><path d="M4 1V7M1 4H7" stroke="#fff" /></svg></button>
			</nav>
		</div>

		<aside class="panel">
			<div class="panel-tabs">
				<button class="active"><svg viewBox="0 0 16 16">{@html icons.wheel}</svg>Properties</button>
				<button><svg viewBox="0 0 16 16">{@html icons.layers}</svg>Layers</button>
				{@render gear()}
			</div>
			<table>
				<tbody>
					<tr><th colspan="2">Layout</th></tr>
					<tr><td class="name">Title</td><td>AR-RZUT-01</td></tr>
				</tbody>
			</table>
		</aside>
	</main>

	<footer class="status">
		<span class="w-s">CPlane</span>
		<span class="w-m">x 263.3</span>
		<span class="w-m">y 471.1</span>
		<span class="w-m">z 0.0</span>
		<span class="w-m">Millimeters</span>
		<span class="w-l"><i></i>Default</span>
		<button>Grid Snap</button>
		<button>Ortho</button>
		<button class="on">Planar</button>
		<button>Osnap</button>
	</footer>

	<section class="grasshopper">
		<h2>Grasshopper - drzwi-02</h2>
		<nav class="gh-menu">
			{#each ghMenus as m}<button>{m}</button>{/each}
		</nav>
		<nav class="gh-tabs">
			{#each ghTabs as t, i}<button class:active={i === 1}>{t}</button>{/each}
		</nav>
		<div class="ribbon">
			{#each ribbon as g}
				<div class="ribbon-group">
					<div class="sets">
						{#each g.sets as set}
							<div class="set">
								{#each set as icon}
									<button aria-label={g.name}><svg viewBox="0 0 16 16">{@html icon}</svg></button>
								{/each}
							</div>
						{/each}
					</div>
					<div class="ribbon-name"><span>{g.name}</span>{#if g.more}<em>+</em>{/if}</div>
				</div>
			{/each}
		</div>
		<div class="canvas-bar">
			<button aria-label="Open"><svg viewBox="0 0 16 16"><path d="M2 15V4L6 1H12V6" fill="#fff" stroke="#444" /><path d="M1 15L3 7H15L14 15Z" fill="#7cc242" stroke="#2f6d17" /></svg></button>
			<button aria-label="Save"><svg viewBox="0 0 16 16"><path d="M0.500 0.500H15.500V15.500H2L0.500 14Z" fill="#2a7de0" stroke="#123c7d" /><rect x="3" y="1" width="10" height="6" fill="#dfe9f7" /><rect x="4" y="10" width="8" height="5" fill="#333" /><rect x="6" y="11" width="2" height="4" fill="#fff" /></svg></button>
			<hr />
			<div class="zoom">
				<select bind:value={zoom} aria-label="Zoom"><option>51%</option><option>100%</option></select>
				<svg viewBox="0 0 8 8"><path d="M1 2L4 5L7 2" fill="none" stroke="#555" /></svg>
			</div>
			<button aria-label="Zoom extents"><svg viewBox="0 0 16 16"><path d="M2 6V2H6M10 2H14V6M14 10V14H10M6 14H2V10" fill="none" stroke="#222" stroke-width="2.500" /><circle cx="8" cy="8" r="1.300" fill="#222" /></svg></button>
			<b class="caret"></b>
			<button aria-label="Preview"><svg viewBox="0 0 16 16"><path d="M0 8C4 2 12 2 16 8C12 13 4 13 0 8Z" fill="#dff1fb" stroke="#222" /><circle cx="8" cy="7.500" r="3.500" fill="#2e8fc7" stroke="#123" /><circle cx="8" cy="7.500" r="1.400" fill="#111" /></svg></button>
			<b class="caret"></b>
			<button aria-label="Sketch"><svg viewBox="0 0 16 16"><path d="M1 14C4 8 0 7 3 6S3 15 7 13" fill="none" stroke="#222" stroke-width="1.300" /><path d="M6 12L7 7L12 2L16 1L15 6L11 11Z" fill="#d8372a" stroke="#6d1a12" stroke-width=".7" /><path d="M8 8L13 3" stroke="#ff9c8c" /></svg></button>
		</div>
		<svg class="canvas">
			<defs>
				<linearGradient id="light" x2="0" y2="1"><stop stop-color="#f0f0f0" /><stop offset="1" stop-color="#cfcfcf" /></linearGradient>
				<linearGradient id="violet" x2="0" y2="1"><stop stop-color="#a9a8bd" /><stop offset="1" stop-color="#82819a" /></linearGradient>
				<linearGradient id="grey" x2="0" y2="1"><stop stop-color="#a9a9b6" /><stop offset="1" stop-color="#82828f" /></linearGradient>
				<linearGradient id="yellow"><stop stop-color="#fdfb62" /><stop offset="1" stop-color="#fbf84c" /></linearGradient>
			</defs>
			<g transform="translate(-583 -329)">
				<rect x="618.500" y="352.500" width="1200" height="900" fill="#d5d0c7" stroke="#3c3838" />
				{#each blocks as [x, y, r, b, fill]}
					<rect x={x + 0.5} y={y + 0.5} width={r - x} height={b - y} {fill} class="block" />
				{/each}
				{#each paleGroups as [x, y, r, b]}
					<rect x={x + 0.5} y={y + 0.5} width={r - x} height={b - y} class="pale" />
				{/each}
				{#each notes as [t, x, y, w]}
					<rect {x} y={y - 3} width={w} height="6" fill="#b9b9b6" />
					<text {x} y={y + 2} class="note">{t}</text>
				{/each}
				{#each violetNotes as [t, x, y, w]}
					<rect {x} y={y - 3} width={w} height="6" fill="#9a80d4" />
					<text {x} y={y + 2} class="note violet">{t}</text>
				{/each}
				<g class="wires">
					{#each links as l}<path d={linkPath(l)} />{/each}
					{#each loops as d}<path {d} />{/each}
				</g>
				{#each sliders as [x, y, r, b, dark]}
					<rect x={x + 0.5} y={y + 0.5} width={r - x} height={b - y} rx="1.500" fill="url(#light)" class="node" />
					{#if dark}<rect x={x + 0.5} y={y + 0.5} width={dark} height={b - y} rx="1" fill="url(#violet)" class="node" />{/if}
				{/each}
				{#each Object.entries(nodes) as [kind, list]}
					{#each list as [x, y, r, b]}
						<rect x={x + 0.5} y={y + 0.5} width={r - x} height={b - y} rx="1.500" fill="url(#{kind})" class="node" />
					{/each}
				{/each}
				{#each titles as [t, x, y]}<text {x} {y} class="title">{t}</text>{/each}
			</g>
		</svg>
	</section>
</div>

<style>
	:global(body) {
		margin: 0;
	}

	.rhino {
		position: relative;
		display: flex;
		flex-direction: column;
		height: 100vh;
		overflow: hidden;
		background: #dfe3ec;
		color: #1c1c1c;
		font: 9px/12px 'Liberation Sans', Arial, sans-serif;
	}

	button {
		padding: 0;
		border: 0;
		background: none;
		color: inherit;
		font: inherit;
		white-space: nowrap;
	}

	svg {
		display: block;
	}

	h1,
	h2 {
		margin: 0;
		font-size: inherit;
		font-weight: 400;
	}

	.titlebar {
		display: flex;
		align-items: center;
		height: 17px;
		padding-left: 2px;
		background: #fff;
	}

	.titlebar h1 {
		flex: 1;
		padding-left: 4px;
		font-family: 'Open Sans', sans-serif;
	}

	.logo {
		width: 12px;
		height: 12px;
	}

	.window-buttons {
		display: flex;
	}

	.window-buttons button {
		display: grid;
		place-items: center;
		width: 34px;
		height: 16px;
	}

	.window-buttons svg {
		width: 9px;
		height: 9px;
	}

	.menubar {
		display: flex;
		gap: 9px;
		height: 15px;
		padding-left: 5px;
		background: #fff;
		font-family: 'Open Sans', sans-serif;
	}

	.command {
		padding: 1px 0 0 5px;
		background: #d9dbe0;
	}

	.history,
	.prompt {
		display: flex;
		justify-content: space-between;
		background: #fff;
	}

	.history {
		height: 21px;
	}

	.history svg,
	.prompt svg {
		width: 10px;
		background: #eee;
	}

	.history span {
		padding: 1px;
	}

	.prompt {
		height: 13px;
		margin-top: 2px;
		padding-left: 1px;
	}

	.prompt i {
		width: 1px;
		height: 11px;
		margin: 1px 0 0 2px;
		background: #111;
	}

	.prompt input {
		flex: 1;
		min-width: 0;
		padding: 0;
		border: 0;
		outline: 0;
		font: inherit;
	}

	.toolbars {
		display: flex;
		gap: 6px;
		padding: 6px 0 0 5px;
		background: #dde1eb;
	}

	.toolbar {
		display: flex;
		flex-direction: column;
		min-width: 0;
		background: linear-gradient(#d9dfea 12px, #f7f8fb 13px, #e3e7f0);
	}

	.standard {
		flex: 852;
	}

	.arq {
		flex: 401;
	}

	.tabs {
		display: flex;
		height: 13px;
		font: 8px/13px 'Open Sans', sans-serif;
	}

	.tabs > button:not(.gear) {
		padding: 0 5px 0 7px;
		border-right: 1px solid #b4bccd;
		border-radius: 0 5px 0 0;
	}

	.tabs > .active:not(.gear) {
		padding-right: 4px;
		background: #fff;
		border-radius: 5px 2px 0 0;
	}

	.gear {
		width: 12px;
		margin-left: auto;
	}

	.gear svg {
		width: 11px;
		height: 11px;
	}

	.tools {
		display: flex;
		gap: 1px;
		height: 28px;
		padding-left: 1px;
	}

	.spread {
		max-width: 675px;
		justify-content: space-between;
		padding-left: 0;
	}

	.tool {
		position: relative;
		display: grid;
		place-items: center;
		width: 20px;
		height: 21px;
	}

	.tool svg {
		width: 16px;
		height: 16px;
	}

	.flyout::after {
		content: '';
		position: absolute;
		right: 0;
		bottom: 0;
		border-style: solid;
		border-width: 0 0 4px 4px;
		border-color: transparent transparent #666;
	}

	main {
		display: flex;
		flex: 1;
		min-height: 0;
	}

	.sidebar {
		display: grid;
		grid-template-columns: 21px 21px;
		grid-auto-rows: 21px;
		align-content: start;
		width: 48px;
		padding: 6px 0 0 1px;
		box-sizing: border-box;
		background: #dfe4ee;
	}

	.workspace {
		display: flex;
		flex-direction: column;
		flex: 1;
		min-width: 0;
	}

	.viewport {
		position: relative;
		flex: 1;
		min-height: 0;
		background: #c0c0c0;
	}

	.view-title {
		position: absolute;
		top: 1px;
		left: 1px;
		display: flex;
		align-items: center;
		gap: 6px;
		height: 13px;
		padding-left: 6px;
		background: #92abc8;
	}

	.view-title svg {
		width: 9px;
		height: 12px;
	}

	.sheet {
		width: 100%;
		height: 100%;
	}

	.walls {
		stroke: #111;
		stroke-width: 1;
	}

	.walls .heavy {
		fill: none;
		stroke-width: 2;
	}

	.marks {
		fill: #222;
		font-size: 16px;
	}

	.marks.red {
		fill: #8e1420;
	}

	.door {
		fill: #90696c;
		stroke: #8a2730;
	}

	.axis {
		fill: #555;
		font-size: 10px;
	}

	.layout-tabs {
		display: flex;
		height: 16px;
		padding-left: 2px;
		background: #d6dbe6;
		line-height: 16px;
	}

	.layout-tabs button {
		padding: 0 5px;
		border-right: 1px solid #b9c0ce;
		border-radius: 0 0 4px 0;
	}

	.layout-tabs .active {
		background: #fff;
	}

	.layout-tabs .add {
		padding: 0 9px;
	}

	.layout-tabs svg {
		width: 8px;
		height: 8px;
	}

	.panel {
		width: 246px;
		padding: 6px 0 0 7px;
		box-sizing: border-box;
	}

	.panel-tabs {
		display: flex;
		height: 16px;
	}

	.panel-tabs button:not(.gear) {
		display: flex;
		align-items: center;
		gap: 2px;
		padding: 0 6px 0 2px;
		border-right: 1px solid #aab3c4;
		border-radius: 0 10px 0 0;
	}

	.panel-tabs .active:not(.gear) {
		background: #fff;
	}

	.panel-tabs button:not(.gear) svg {
		width: 12px;
		height: 12px;
	}

	.panel-tabs .gear {
		padding-top: 3px;
	}

	table {
		width: 100%;
		border-top: 7px solid #fff;
		border-collapse: collapse;
		background: #fff;
	}

	th,
	td {
		height: 15px;
		padding: 0 4px;
		border: 1px solid #e2e3e6;
		font-weight: 400;
		text-align: left;
	}

	th {
		background: #f7f7f9;
	}

	.name {
		width: 103px;
		padding-left: 11px;
	}

	.status {
		display: flex;
		height: 15px;
		background: #e9ebf0;
		line-height: 16px;
	}

	.status > * {
		padding: 0 6px;
		border-right: 1px solid #bcc2cd;
		box-sizing: border-box;
		text-align: center;
	}

	.w-s {
		width: 42px;
	}

	.w-m {
		width: 66px;
	}

	.w-l {
		display: flex;
		gap: 1px;
		width: 134px;
	}

	.w-l i {
		width: 10px;
		height: 10px;
		margin-top: 3px;
		background: #000;
	}

	.on {
		background: #f8f8fa;
		font-weight: 700;
	}

	.grasshopper {
		position: absolute;
		inset: 180px 0 0 581px;
		display: flex;
		flex-direction: column;
		overflow: hidden;
		border-top: 1px solid #8a8a8a;
		border-left: 1px solid #8a8a8a;
		border-bottom: 1px solid #000;
		background: #fff;
		box-shadow: 0 0 6px #0006;
		font-size: 8px;
	}

	.grasshopper h2 {
		flex: none;
		padding-left: 5px;
		color: #999;
		font: 9px/22px 'Open Sans', sans-serif;
	}

	.gh-menu,
	.gh-tabs {
		display: flex;
		flex: none;
		background: #f3f3f3;
	}

	.gh-menu {
		gap: 14px;
		height: 19px;
		padding-left: 10px;
	}

	.gh-tabs {
		height: 16px;
		padding-left: 5px;
		gap: 14px;
		color: #777;
	}

	.gh-tabs .active {
		margin: 0 -7px;
		padding: 0 6px;
		border: 1px solid #999;
		border-bottom: 0;
		border-radius: 4px 4px 0 0;
		background: #fff;
		color: #111;
	}

	.ribbon {
		display: flex;
		flex: none;
		gap: 3px;
		padding: 2px 0 7px 1px;
		border-top: 1px solid #999;
		background: #eee;
	}

	.ribbon-group {
		display: flex;
		flex: none;
		flex-direction: column;
		border: 1px solid #8a8a8a;
		border-radius: 3px;
		background: linear-gradient(#dcdcdc, #c6c6c6);
		overflow: hidden;
	}

	.sets {
		display: flex;
		gap: 8px;
		padding-right: 1px;
	}

	.set {
		display: grid;
		grid-auto-flow: column;
		grid-template-rows: 21px 21px;
		grid-auto-columns: 21px;
		padding-top: 1px;
	}

	.set + .set {
		box-shadow: -4px 0 #dcdcdc, -5px 0 #b2b2b2;
	}

	.set button {
		display: grid;
		place-items: center;
	}

	.set svg {
		width: 16px;
		height: 16px;
	}

	.ribbon-name {
		position: relative;
		height: 10px;
		background: #222;
		color: #fff;
		line-height: 9px;
		text-align: center;
	}

	.ribbon-name em {
		position: absolute;
		right: 2px;
		font-style: normal;
	}

	.canvas-bar {
		display: flex;
		flex: none;
		align-items: center;
		gap: 4px;
		height: 26px;
		padding-left: 3px;
		border-top: 1px solid #777;
		border-left: 1px solid #777;
		box-sizing: border-box;
		background: linear-gradient(#fdfdfd, #f1f1f1);
	}

	.canvas-bar button + button {
		margin-left: 2px;
	}

	.canvas-bar button svg {
		width: 17px;
		height: 17px;
	}

	.canvas-bar hr {
		width: 1px;
		height: 17px;
		margin: 0;
		border: 0;
		background: #ccc;
	}

	.zoom {
		position: relative;
		width: 52px;
	}

	.zoom select {
		display: block;
		width: 100%;
		height: 19px;
		padding: 0 2px;
		border: 1px solid #999;
		border-radius: 0;
		appearance: none;
		background: #fff;
		font: 9px 'Open Sans', sans-serif;
	}

	.zoom svg {
		position: absolute;
		top: 6px;
		right: 3px;
		width: 8px;
		height: 8px;
		pointer-events: none;
	}

	.caret {
		border: 2px solid transparent;
		border-top-color: #111;
	}

	.canvas {
		flex: 1;
		width: 100%;
		min-height: 0;
		border-left: 1px solid #777;
		background: #cdc7c0;
	}

	.block {
		stroke: #a184d6;
		stroke-opacity: 0.5;
	}

	.pale {
		fill: #eeeeeb;
		stroke: #c3bfb9;
	}

	.node {
		stroke: #33333a;
	}

	.wires {
		fill: none;
		stroke: #1a0f1c;
		stroke-opacity: 0.8;
	}

	.note {
		fill: #6f6f6d;
		font-size: 5px;
		font-weight: 700;
	}

	.note.violet {
		fill: #65509c;
	}

	.title {
		fill: #1c1c1c;
		font-size: 7px;
		font-weight: 700;
	}
</style>
